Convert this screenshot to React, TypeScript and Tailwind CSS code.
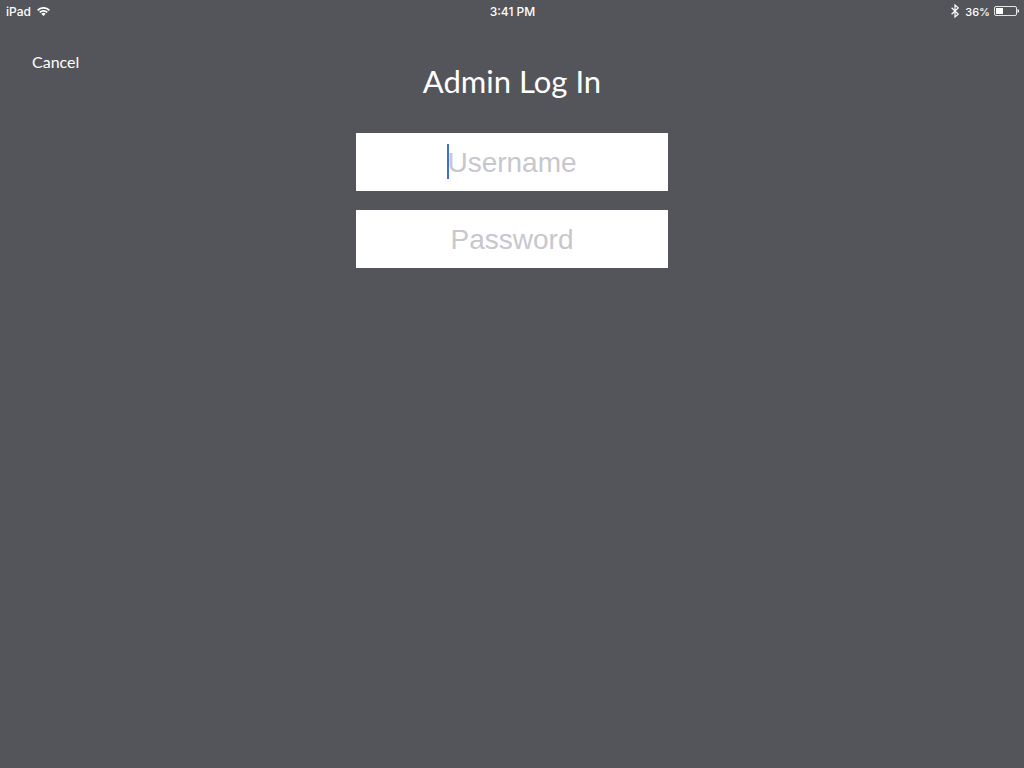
function WifiIcon() {
  return (
    <svg className="h-[9px] w-[13px]" viewBox="0 0 13 9" fill="none" stroke="currentColor" strokeWidth="1.7" aria-hidden="true">
      <path d="M0.6 3.3a8.3 8.3 0 0 1 11.8 0" />
      <path d="M2.7 5.4a5.4 5.4 0 0 1 7.6 0" />
      <path d="M6.5 9 4.3 6.8a3.1 3.1 0 0 1 4.4 0z" fill="currentColor" stroke="none" />
    </svg>
  );
}

function BluetoothIcon() {
  return (
    <svg className="h-[14px] w-[8px]" viewBox="0 0 8 14" fill="none" stroke="currentColor" strokeWidth="1.2" aria-hidden="true">
      <path d="M0.6 3.7 7.2 10.1 4 13V1l3.2 2.9L0.6 10.3" />
    </svg>
  );
}

function BatteryIcon() {
  return (
    <svg className="h-[10px] w-[25px]" viewBox="0 0 25 10" aria-hidden="true">
      <rect x="0.5" y="0.5" width="22" height="9" rx="1.5" fill="none" stroke="currentColor" strokeOpacity="0.85" />
      <rect x="2" y="2" width="7" height="6" fill="currentColor" />
      <path d="M23.5 3c1 .3 1.5 1 1.5 2s-.5 1.7-1.5 2z" fill="currentColor" />
    </svg>
  );
}

const fieldClass =
  "block h-[58px] w-full bg-white pt-0.5 text-center font-['Liberation_Sans',Arial,sans-serif] text-[28px] text-gray-900 caret-[#4169e1] outline-none placeholder:text-[#c7c7cd]";

export default function App() {
  return (
    <div className="min-h-screen bg-[#54555a] font-[Lato,sans-serif] text-white">
      <header className="grid h-5 grid-cols-3 items-center pr-[5px] pl-1.5 font-[Inter,sans-serif] text-xs leading-5 font-medium">
        <div className="flex items-center gap-1.5">
          <span className="pt-0.5">iPad</span>
          <WifiIcon />
        </div>
        <time className="pt-0.5 text-center">3:41 PM</time>
        <div className="flex items-center justify-end">
          <BluetoothIcon />
          <span className="ml-1.5 pt-0.5 text-[11px]">36%</span>
          <span className="ml-1">
            <BatteryIcon />
          </span>
        </div>
      </header>

      <main className="grid grid-cols-[1fr_312px_1fr] px-8 pt-8">
        <div>
          <button type="button" className="block text-base leading-5">
            Cancel
          </button>
        </div>
        <form onSubmit={(e) => e.preventDefault()}>
          <h1 className="pt-[9px] text-center text-[31px] leading-10">Admin Log In</h1>
          <div className="relative mt-8">
            <input type="text" aria-label="Username" placeholder="Username" className={fieldClass} />
            <span className="pointer-events-none absolute top-[11px] left-[91px] h-[35px] w-0.5 bg-[#4169e1]" />
          </div>
          <input type="password" aria-label="Password" placeholder="Password" className={`mt-[19px] ${fieldClass}`} />
        </form>
      </main>
    </div>
  );
}
